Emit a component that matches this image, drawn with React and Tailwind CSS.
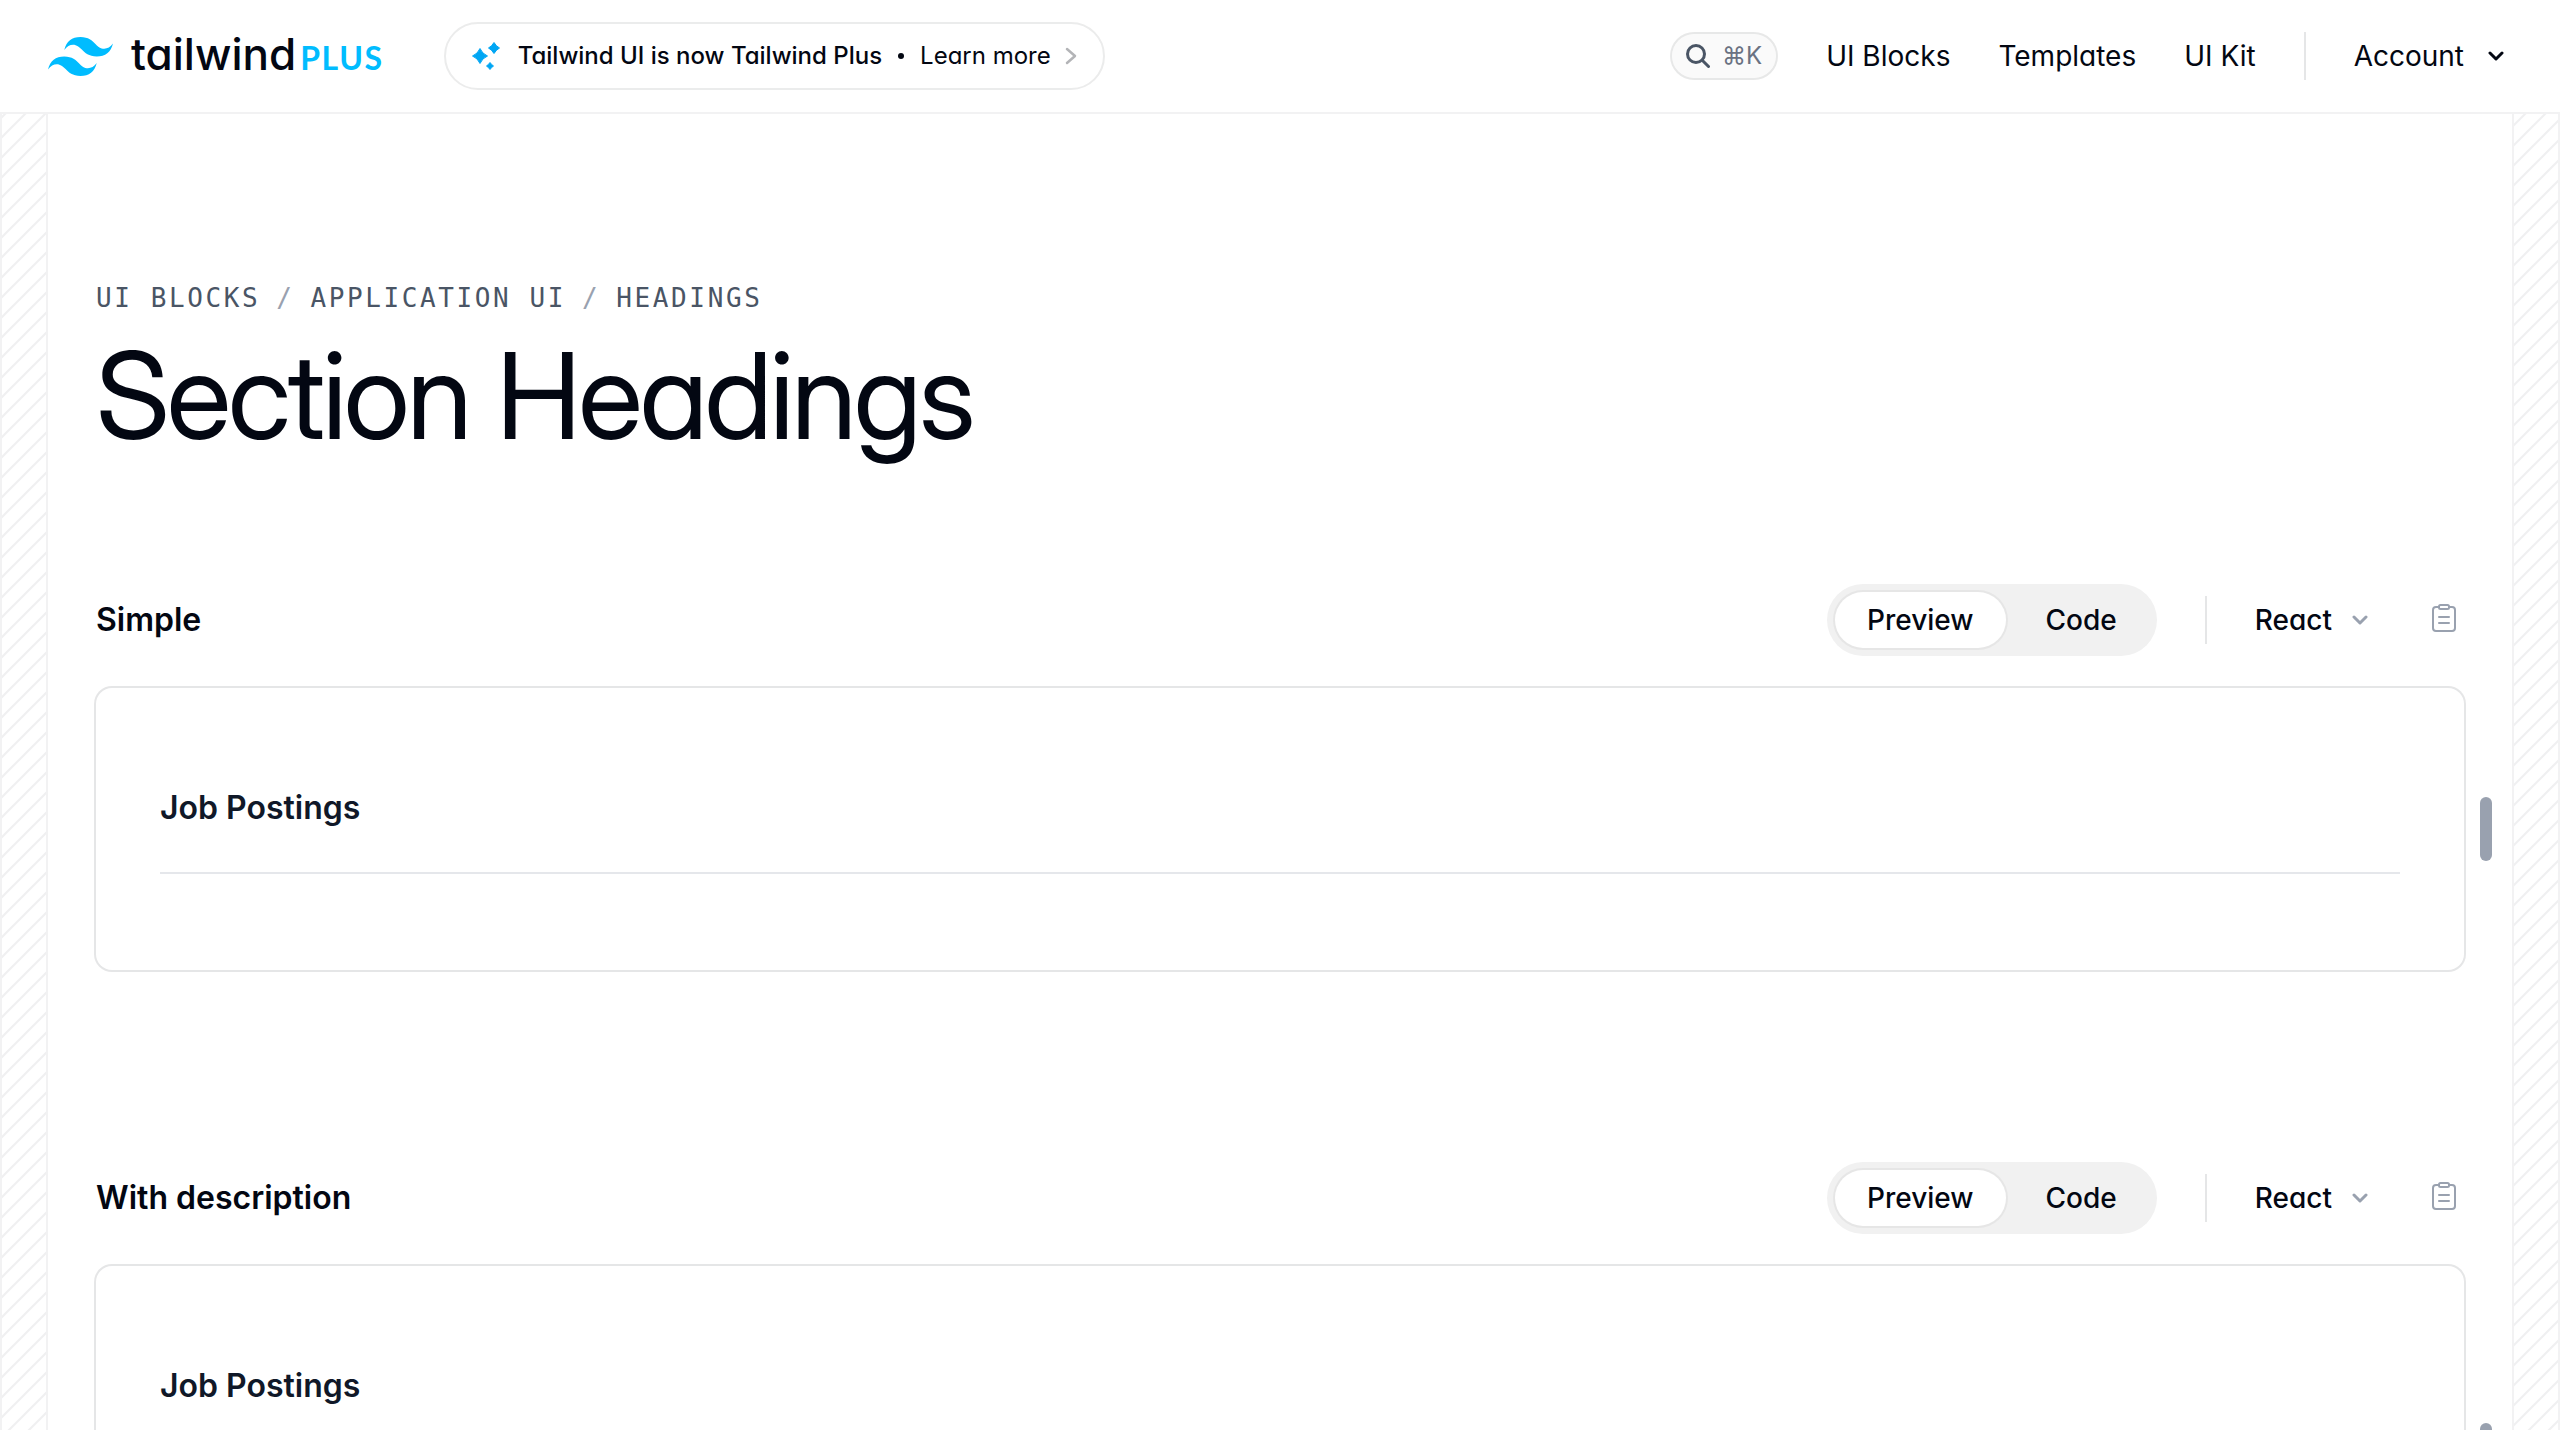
const pageFont =
  "font-['Inter',sans-serif] [font-feature-settings:'cv02','cv03','cv04','cv11']";

function Hatch({ id, shift }) {
  return (
    <div className="relative border-x-2 border-gray-950/5">
      <svg className="absolute inset-0 size-full" aria-hidden="true">
        <defs>
          <pattern id={id} width="20" height="20" patternUnits="userSpaceOnUse" patternTransform={`translate(${shift} 0)`}>
            <path d="M-5 5L5 -5M-5 25L25 -5M15 25L25 15" fill="none" stroke="#030712" strokeOpacity="0.06" strokeWidth="2" />
          </pattern>
        </defs>
        <rect width="100%" height="100%" fill={`url(#${id})`} />
      </svg>
    </div>
  );
}

function TailwindMark() {
  return (
    <svg viewBox="0 0 54 32.4" className="h-[39px] w-[65px] fill-[#00bcff]" aria-hidden="true">
      <path d="M27 0c-7.2 0-11.7 3.6-13.5 10.8 2.7-3.6 5.85-4.95 9.45-4.05 2.054.513 3.522 2.004 5.147 3.653C30.744 13.09 33.808 16.2 40.5 16.2c7.2 0 11.7-3.6 13.5-10.8-2.7 3.6-5.85 4.95-9.45 4.05-2.054-.513-3.522-2.004-5.147-3.653C36.756 3.11 33.692 0 27 0zM13.5 16.2C6.3 16.2 1.8 19.8 0 27c2.7-3.6 5.85-4.95 9.45-4.05 2.054.514 3.522 2.004 5.147 3.653C17.244 29.29 20.308 32.4 27 32.4c7.2 0 11.7-3.6 13.5-10.8-2.7 3.6-5.85 4.95-9.45 4.05-2.054-.513-3.522-2.004-5.147-3.653C23.256 19.31 20.192 16.2 13.5 16.2z" />
    </svg>
  );
}

function Sparkles() {
  return (
    <svg viewBox="0 0 28 28" className="size-7 fill-[#00a6f4] stroke-[#00a6f4]" strokeWidth="1" strokeLinejoin="round" aria-hidden="true">
      <path d="M8 6.500Q10.200 11.800 15.500 14 10.200 16.200 8 21.500 5.800 16.200.5 14 5.800 11.800 8 6.500z" />
      <path d="M22 .5Q24 4 27.500 6 24 8 22 11.500 20 8 16.500 6 20 4 22 .5z" />
      <path d="M18 20.500Q19.400 22.600 21.500 24 19.400 25.400 18 27.500 16.600 25.400 14.500 24 16.600 22.600 18 20.500z" />
    </svg>
  );
}

function Chevron({ className }) {
  return (
    <svg viewBox="0 0 16 10" className={className} fill="none" strokeWidth="3" strokeLinecap="round" strokeLinejoin="round" aria-hidden="true">
      <path d="M2 2l6 6 6-6" />
    </svg>
  );
}

function Clipboard() {
  return (
    <svg viewBox="0 0 24 28" className="h-7 w-6 stroke-[#99a1af]" fill="none" strokeWidth="2" strokeLinecap="round" strokeLinejoin="round" aria-hidden="true">
      <path d="M7 3H4a3 3 0 0 0-3 3v18a3 3 0 0 0 3 3h16a3 3 0 0 0 3-3V6a3 3 0 0 0-3-3h-3" />
      <rect x="7" y="1" width="10" height="4" rx="1.500" />
      <path d="M7 13h10M7 19h10" />
    </svg>
  );
}

function Header() {
  return (
    <header className="flex items-center justify-between border-b-2 border-gray-950/5 px-12">
      <div className="flex h-28 items-center">
        <a href="#" aria-label="Tailwind Plus" className="flex items-center">
          <TailwindMark />
          <span className="mb-1 ml-[18px] flex items-baseline">
            <span className="text-[44px] leading-none font-medium">tailwind</span>
            <span className="ml-1 font-['Lato',sans-serif] text-[32px] leading-none font-bold tracking-wider text-[#00bcff]">PLUS</span>
          </span>
        </a>
        <a href="#" className="ml-[60px] flex h-[68px] items-center rounded-full border-2 border-gray-950/8 px-[26px] text-2xl whitespace-nowrap">
          <Sparkles />
          <span className="ml-[18px] font-medium">Tailwind UI is now Tailwind Plus</span>
          <span className="mx-4 size-[6px] rounded-full bg-gray-950" />
          <span>Learn more</span>
          <svg viewBox="0 0 12 18" className="ml-[14px] h-[18px] w-3 stroke-gray-950/30" fill="none" strokeWidth="2.500" strokeLinecap="round" strokeLinejoin="round" aria-hidden="true">
            <path d="M2 2l8 7-8 7" />
          </svg>
        </a>
      </div>
      <nav className="flex items-center gap-12 text-[28px] leading-10">
        <button aria-label="Search" className="flex h-12 items-center gap-3 rounded-full border-2 border-gray-950/8 bg-gray-950/2 px-[14px] text-2xl text-[#6a7282]">
          <svg viewBox="0 0 24 24" className="size-6 stroke-[#4a5565]" fill="none" strokeWidth="3" strokeLinecap="round" aria-hidden="true">
            <circle cx="10" cy="10" r="8.500" />
            <path d="M16.500 16.500l6 6" />
          </svg>
          <span>⌘K</span>
        </button>
        <a href="#">UI Blocks</a>
        <a href="#">Templates</a>
        <a href="#">UI Kit</a>
        <span className="h-12 w-[2px] bg-gray-950/10" />
        <button className="flex items-center gap-6 pr-2">
          Account
          <Chevron className="h-[10px] w-4 stroke-gray-950" />
        </button>
      </nav>
    </header>
  );
}

function Example({ id, title, cardClass, divider }) {
  return (
    <section aria-labelledby={id}>
      <div className="flex items-center justify-between">
        <h2 id={id} className="text-[32px] leading-12 font-semibold">{title}</h2>
        <div className="flex items-center text-[28px] leading-10 font-medium">
          <div className="flex gap-2 rounded-full bg-[#f1f1f1] p-2">
            <button aria-pressed="true" className="h-14 rounded-full bg-white px-8 ring-2 ring-[#e6e6e6]">Preview</button>
            <button aria-pressed="false" className="h-14 rounded-full px-8">Code</button>
          </div>
          <span className="mx-12 h-12 w-[2px] bg-gray-950/10" />
          <div className="grid items-center">
            <select aria-label={`Framework for ${title}`} className="col-start-1 row-start-1 appearance-none bg-transparent pr-9 [field-sizing:content]">
              <option>React</option>
              <option>Vue</option>
              <option>HTML</option>
            </select>
            <Chevron className="pointer-events-none col-start-1 row-start-1 h-[10px] w-4 justify-self-end stroke-[#99a1af]" />
          </div>
          <button aria-label={`Copy ${title}`} className="mr-2 mb-1 ml-16">
            <Clipboard />
          </button>
        </div>
      </div>
      <div className="relative mt-8">
        <div className={`rounded-2xl bg-white px-16 py-24 ring-2 ring-gray-950/10 ${cardClass}`}>
          <div className={divider ? "border-b-2 border-gray-200 pb-10" : ""}>
            <h3 className="text-[32px] leading-12 font-semibold text-gray-900 [font-feature-settings:normal]">Job Postings</h3>
          </div>
        </div>
        <div className="absolute top-1/2 -right-7 h-16 w-3 -translate-y-1/2 rounded-full bg-[#99a1af]" />
      </div>
    </section>
  );
}

export default function App() {
  return (
    <div className={`flex h-screen flex-col overflow-hidden bg-white text-gray-950 ${pageFont}`}>
      <Header />
      <div className="grid grow grid-cols-[48px_minmax(0,1fr)_48px]">
        <Hatch id="hatch-left" shift={3} />
        <main className="px-12 pt-40">
          <nav aria-label="Breadcrumb" className="flex gap-4 font-['DejaVu_Sans_Mono',monospace] text-[26px] leading-12 tracking-widest text-[#4a5565] uppercase">
            <a href="#">UI Blocks</a>
            <span className="text-[#99a1af]">/</span>
            <a href="#">Application UI</a>
            <span className="text-[#99a1af]">/</span>
            <a href="#">Headings</a>
          </nav>
          <h1 className="mt-[14px] font-['Inter_Display','Inter',sans-serif] text-[120px] leading-none tracking-tight">Section Headings</h1>
          <div className="mt-32 flex flex-col gap-48">
            <Example id="simple" title="Simple" cardClass="" divider />
            <Example id="with-description" title="With description" cardClass="min-h-[378px]" />
          </div>
        </main>
        <Hatch id="hatch-right" shift={11} />
      </div>
    </div>
  );
}
